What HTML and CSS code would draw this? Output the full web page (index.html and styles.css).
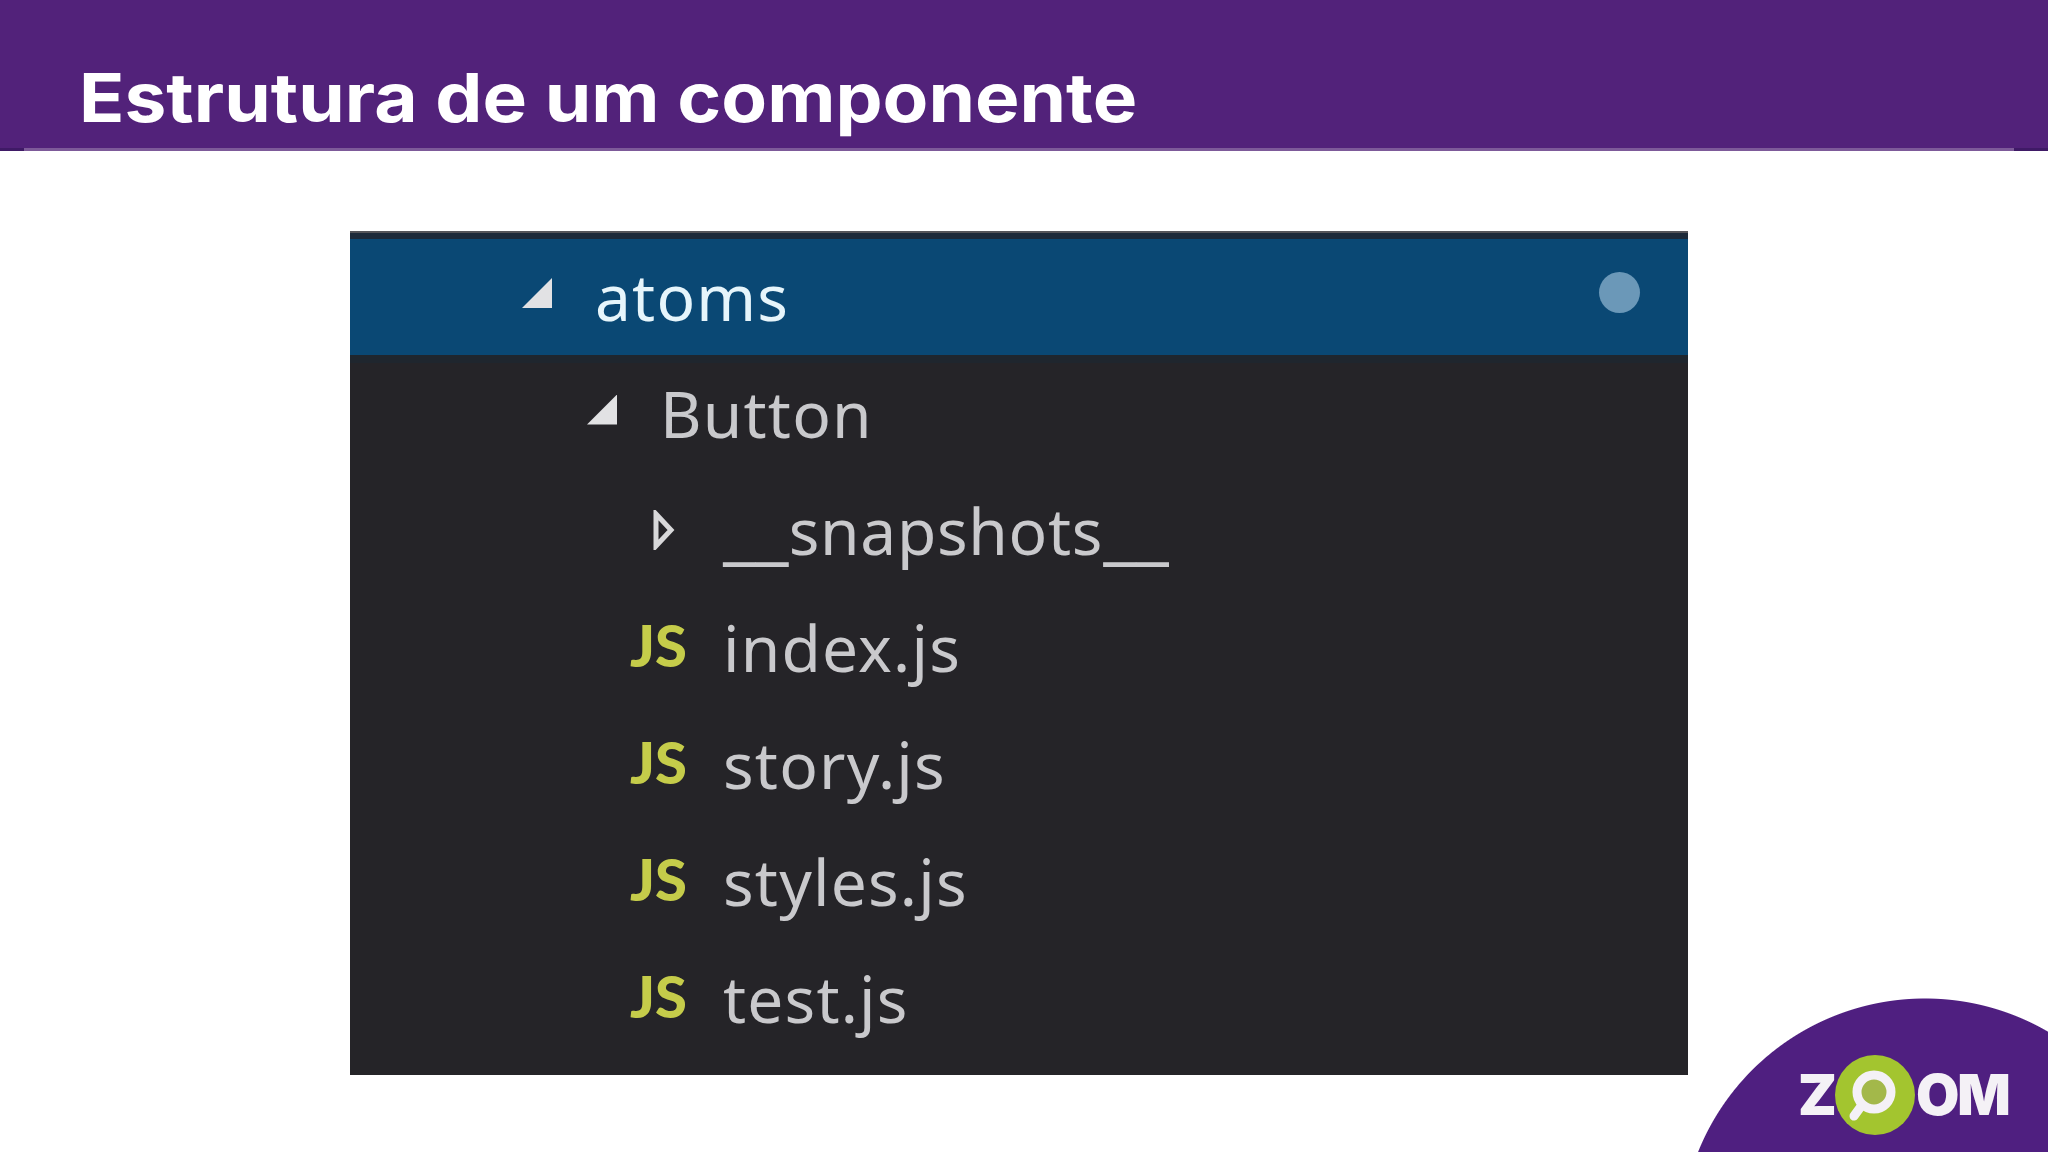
FILE: index.html
```html
<!DOCTYPE html>
<html lang="pt-BR">
<head>
    <meta charset="UTF-8">
    <meta name="viewport" content="width=device-width, initial-scale=1.0">
    <title>Estrutura de um componente</title>
    <link rel="stylesheet" href="styles.css">
</head>
<body>
    <header class="top">
        <h1>Estrutura de um componente</h1>
    </header>
    <main class="content">
        <div class="tree">
            <div class="row selected depth-0">
                <span class="tri open"></span>
                <span class="name">atoms</span>
                <span class="dot"></span>
            </div>
            <div class="row depth-1">
                <span class="tri open"></span>
                <span class="name">Button</span>
            </div>
            <div class="row depth-2">
                <svg class="tri-closed" width="22" height="40" viewBox="0 0 22 40"><path d="M3 4 L18 20 L3 36 Z" fill="none" stroke="#d8d8da" stroke-width="5"/></svg>
                <span class="name snap"><span class="us">__</span>snapshots<span class="us">__</span></span>
            </div>
            <div class="row file"><span class="js">JS</span><span class="name">index.js</span></div>
            <div class="row file"><span class="js">JS</span><span class="name">story.js</span></div>
            <div class="row file"><span class="js">JS</span><span class="name">styles.js</span></div>
            <div class="row file"><span class="js">JS</span><span class="name">test.js</span></div>
        </div>
    </main>
    <div class="corner">
        <div class="logo">
            <span>Z</span>
            <svg class="lens" width="84" height="84" viewBox="0 0 84 84">
                <circle cx="42" cy="42" r="40" fill="#a3c52f"/>
                <line x1="29" y1="52" x2="21" y2="63" stroke="#f4f1f6" stroke-width="9" stroke-linecap="round"/>
                <circle cx="41" cy="39" r="17" fill="#a3b84a" stroke="#f4f1f6" stroke-width="9"/>
            </svg>
            <span class="om">OM</span>
        </div>
    </div>
</body>
</html>
```

FILE: styles.css
```css
*{
    margin: 0;
    padding: 0;
    box-sizing: border-box;
}
html,body{
    width: 100%;
    height: 100%;
    overflow: hidden;
    background-color: #fff;
}

.top{
    height: 151px;
    background-color: #52227a;
    border-bottom: 3px solid #3f1a66;
    padding: 56px 0 0 79px;
    position: relative;
}
.top h1{
    width: fit-content;
    font-family: "Inter", "Liberation Sans", sans-serif;
    font-size: 68px;
    line-height: 82px;
    font-weight: 700;
    color: #fff;
    transform: scaleX(1.1);
    transform-origin: left center;
    white-space: nowrap;
}
/* thin line under the title, not quite edge to edge */
.top::after{
    content: "";
    position: absolute;
    left: 24px;
    right: 34px;
    bottom: -3px;
    height: 3px;
    background-color: #7d5a99;
}

.content{
    padding: 80px 0 0 350px;
}
.tree{
    width: 1338px;
    height: 844px;
    background-color: #252428;
    border-top: 2px solid #55555a;
    font-family: "Noto Sans", "Open Sans", sans-serif;
    font-size: 64px;
    letter-spacing: 1.2px;
    color: #c9c9cc;
}
.row{
    height: 117px;
    display: flex;
    align-items: center;
}
.selected{
    height: 122px;
    background-color: #0a4874;
    border-top: 6px solid #1d2a3a;
    box-shadow: 0 8px 0 #1f262e;
    color: #e6f5fb;
    padding-right: 48px;
}
.selected .name{
    margin-top: -2px;
}
.depth-0{
    padding-left: 172px;
}
.depth-1{
    padding-left: 237px;
}
.depth-2{
    padding-left: 303px;
}
.file{
    padding-left: 280px;
}
.tri{
    width: 30px;
    height: 30px;
    background-color: #e2e2e4;
    clip-path: polygon(100% 0, 100% 100%, 0 100%);
    margin-right: 43px;
    margin-top: -8px;
}
.tri-closed{
    margin-right: 48px;
    margin-top: -1px;
}
.snap{
    letter-spacing: 0.7px;
}
/* underscores are longer than in this font */
.us{
    font-size: 74px;
    line-height: 0;
    letter-spacing: 0;
}
.dot{
    width: 41px;
    height: 41px;
    border-radius: 50%;
    background-color: #6b98b8;
    margin-left: auto;
    margin-top: -10px;
}
.js{
    width: 93px;
    font-family: "Lato", sans-serif;
    font-size: 58px;
    font-weight: 900;
    letter-spacing: 0;
    color: #c5cc4a;
    margin-top: -6px;
}

/* logo in the bottom right corner, the circle is cut by the page edge */
.corner{
    position: absolute;
    right: 0;
    bottom: 0;
    width: 368px;
    height: 154px;
    background: radial-gradient(circle 245px at 245px 245px, #4f1f80 99.6%, transparent 100%);
}
.logo{
    position: absolute;
    left: 118px;
    top: 55px;
    display: flex;
    align-items: center;
    font-family: "Inter", sans-serif;
    font-size: 56px;
    font-weight: 900;
    line-height: 84px;
    color: #f4f1f6;
}
.om{
    letter-spacing: -2px;
}
.lens{
    margin: 0 -1px 0 -4px;
}
```
